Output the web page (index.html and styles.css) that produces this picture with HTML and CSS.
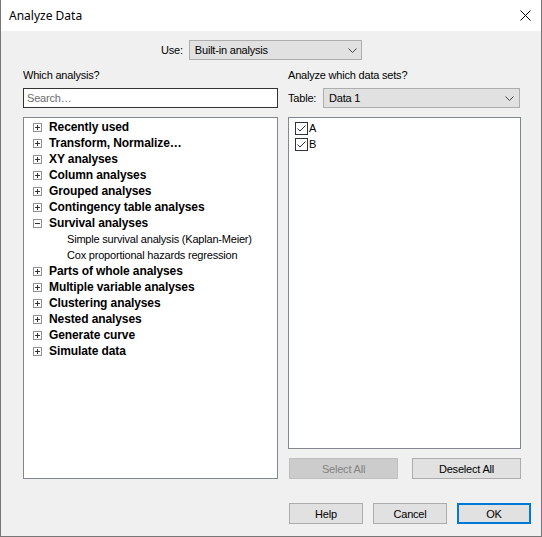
FILE: index.html
```html
<!DOCTYPE html>
<html>
<head>
  <title>Analyze Data</title>
  <link rel="stylesheet" href="styles.css">
</head>
<body>
  <div class="window">
    <div class="titlebar">
      <span class="title">Analyze Data</span>
      <svg class="close" width="11" height="11" viewBox="0 0 11 11">
        <path d="M0.5 0.5 L10.5 10.5 M10.5 0.5 L0.5 10.5" stroke="#000" stroke-width="1" fill="none"/>
      </svg>
    </div>
    <div class="content">
      <div class="use-row">
        <label class="field-label">Use:</label>
        <div class="select use-select">
          <span>Built-in analysis</span>
          <svg class="chevron" width="9" height="5" viewBox="0 0 9 5"><path d="M0.5 0.5 L4.5 4.5 L8.5 0.5" stroke="#444" fill="none"/></svg>
        </div>
      </div>

      <div class="columns">
        <div class="col col-left">
          <div class="caption">Which analysis?</div>
          <div class="search">Search…</div>
          <ul class="tree">
            <li class="node"><span class="expander plus"></span>Recently used</li>
            <li class="node"><span class="expander plus"></span>Transform, Normalize…</li>
            <li class="node"><span class="expander plus"></span>XY analyses</li>
            <li class="node"><span class="expander plus"></span>Column analyses</li>
            <li class="node"><span class="expander plus"></span>Grouped analyses</li>
            <li class="node"><span class="expander plus"></span>Contingency table analyses</li>
            <li class="node"><span class="expander"></span>Survival analyses</li>
            <li class="leaf">Simple survival analysis (Kaplan-Meier)</li>
            <li class="leaf">Cox proportional hazards regression</li>
            <li class="node"><span class="expander plus"></span>Parts of whole analyses</li>
            <li class="node"><span class="expander plus"></span>Multiple variable analyses</li>
            <li class="node"><span class="expander plus"></span>Clustering analyses</li>
            <li class="node"><span class="expander plus"></span>Nested analyses</li>
            <li class="node"><span class="expander plus"></span>Generate curve</li>
            <li class="node"><span class="expander plus"></span>Simulate data</li>
          </ul>
        </div>

        <div class="col col-right">
          <div class="caption">Analyze which data sets?</div>
          <div class="table-row">
            <label class="field-label">Table:</label>
            <div class="select table-select">
              <span>Data 1</span>
              <svg class="chevron" width="9" height="5" viewBox="0 0 9 5"><path d="M0.5 0.5 L4.5 4.5 L8.5 0.5" stroke="#444" fill="none"/></svg>
            </div>
          </div>
          <div class="datasets">
            <div class="check-row">
              <span class="checkbox"><svg width="11" height="11" viewBox="0 0 11 11"><path d="M1.5 5.5 L4 8 L9.5 2.5" stroke="#333" fill="none"/></svg></span>A
            </div>
            <div class="check-row">
              <span class="checkbox"><svg width="11" height="11" viewBox="0 0 11 11"><path d="M1.5 5.5 L4 8 L9.5 2.5" stroke="#333" fill="none"/></svg></span>B
            </div>
          </div>
          <div class="pair-buttons">
            <button class="btn btn-disabled" disabled>Select All</button>
            <button class="btn">Deselect All</button>
          </div>
        </div>
      </div>

      <div class="footer">
        <button class="btn btn-small">Help</button>
        <button class="btn btn-small">Cancel</button>
        <button class="btn btn-small btn-default">OK</button>
      </div>
    </div>
  </div>
</body>
</html>
```

FILE: styles.css
```css
body {
  margin: 0;
  font-family: "Liberation Sans", Arial, sans-serif;
  font-size: 11px;
  letter-spacing: -0.2px;
  color: #000;
  background-color: #f0f0f0;
}

.window {
  width: 542px;
  height: 537px;
  box-sizing: border-box;
  border: 1px solid #777;
  border-top: none;
  background-color: #f0f0f0;
}

.titlebar {
  height: 31px;
  background-color: #fff;
  display: flex;
  align-items: center;
  justify-content: space-between;
  padding: 0 10px 0 8px;
}

.title {
  font-family: "Noto Sans", sans-serif;
  font-size: 12px;
  letter-spacing: 0;
  padding-bottom: 1px;
}

.close {
  display: block;
  margin-top: -1px;
}

.content {
  padding-left: 22px;
}

.use-row {
  display: flex;
  align-items: center;
  margin-top: 9px;
  padding-left: 138px;
}

.field-label {
  margin-right: 6px;
}

.select {
  height: 20px;
  box-sizing: border-box;
  border: 1px solid #adadad;
  background-color: #e1e1e1;
  display: flex;
  align-items: center;
  justify-content: space-between;
  padding: 0 4px 0 5px;
}

.use-select {
  width: 173px;
}

.table-select {
  width: 197px;
  padding-right: 5px;
}

.columns {
  display: flex;
  gap: 10px;
  margin-top: 8px;
}

.col {
  display: flex;
  flex-direction: column;
}

.col-left {
  width: 255px;
}

.col-right {
  width: 233px;
}

.caption {
  height: 14px;
  line-height: 14px;
  margin-bottom: 6px;
}

.search {
  height: 20px;
  box-sizing: border-box;
  border: 1px solid #333;
  background-color: #fff;
  color: #6d6d6d;
  padding-left: 3px;
  line-height: 18px;
}

.tree {
  list-style: none;
  margin: 9px 0 0 0;
  padding: 1px 0 0 0;
  height: 362px;
  box-sizing: border-box;
  border: 1px solid #828790;
  background-color: #fff;
}

.tree li {
  height: 16px;
  line-height: 16px;
  display: flex;
  align-items: center;
  white-space: nowrap;
}

.node {
  font-size: 12px;
  font-weight: bold;
  letter-spacing: -0.1px;
  padding-left: 9px;
}

.leaf {
  padding-left: 43px;
}

.expander {
  width: 9px;
  height: 9px;
  box-sizing: border-box;
  border: 1px solid #919191;
  background-color: #fff;
  margin-right: 7px;
  position: relative;
  flex-shrink: 0;
}

.expander::before {
  content: "";
  position: absolute;
  left: 1px;
  top: 3px;
  width: 5px;
  height: 1px;
  background-color: #333;
}

.expander.plus::after {
  content: "";
  position: absolute;
  left: 3px;
  top: 1px;
  width: 1px;
  height: 5px;
  background-color: #333;
}

.table-row {
  display: flex;
  align-items: center;
  justify-content: space-between;
  padding-right: 1px;
}

.table-row .field-label {
  margin-right: 0;
}

.datasets {
  margin-top: 9px;
  height: 332px;
  box-sizing: border-box;
  border: 1px solid #828790;
  background-color: #fff;
  padding: 2px 0 0 6px;
}

.check-row {
  height: 16px;
  display: flex;
  align-items: center;
}

.checkbox {
  width: 13px;
  height: 13px;
  box-sizing: border-box;
  border: 1px solid #333;
  background-color: #fff;
  margin-right: 1px;
  display: flex;
}

.pair-buttons {
  display: flex;
  justify-content: space-between;
  margin-top: 9px;
  padding-left: 1px;
}

.btn {
  width: 109px;
  height: 21px;
  box-sizing: border-box;
  border: 1px solid #adadad;
  background-color: #e1e1e1;
  font-family: "Liberation Sans", Arial, sans-serif;
  font-size: 11px;
  letter-spacing: -0.2px;
  color: #000;
  padding: 0;
}

.btn-disabled {
  background-color: #cccccc;
  border-color: #bfbfbf;
  color: #838383;
}

.footer {
  display: flex;
  justify-content: flex-end;
  gap: 10px;
  margin-top: 24px;
  padding-right: 10px;
}

.btn-small {
  width: 74px;
}

.btn-default {
  border: 2px solid #0078d7;
}
```
